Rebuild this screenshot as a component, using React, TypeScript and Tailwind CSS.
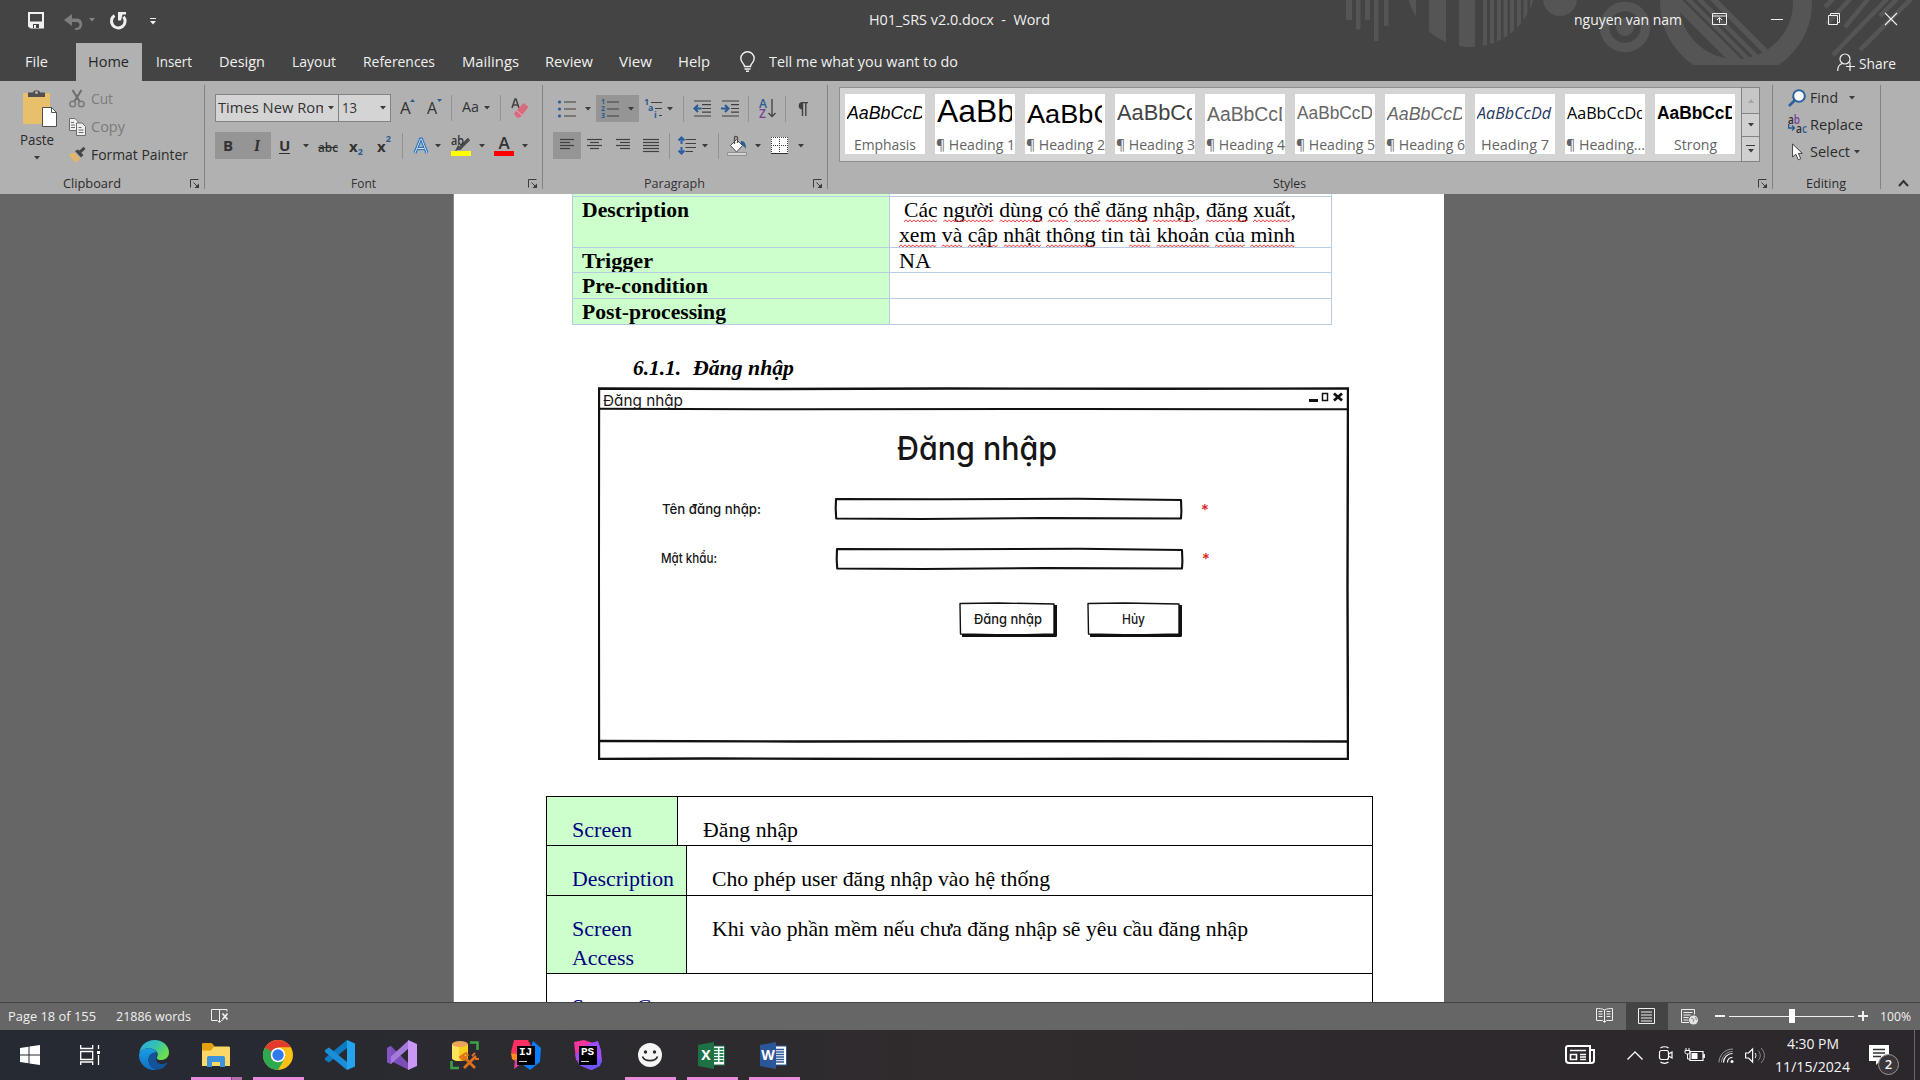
import React, { useLayoutEffect, useRef, useState } from "react";

type Kids = { children?: React.ReactNode };

/* One line of text set to an exact advance width. */
function Fit({ w, className = "", children }: { w: number; className?: string } & Kids) {
  const ref = useRef<HTMLSpanElement>(null);
  const [k, setK] = useState(1);
  useLayoutEffect(() => {
    if (ref.current) setK(w / (ref.current.getBoundingClientRect().width || w));
  }, [w]);
  return (
    <span className={"inline-block shrink-0 whitespace-pre " + className} style={{ width: w }}>
      <span ref={ref} className="inline-block origin-left" style={{ transform: `scaleX(${k})` }}>
        {children}
      </span>
    </span>
  );
}

function Svg({ w, h, className = "", children }: { w: number; h: number; className?: string } & Kids) {
  return (
    <svg width={w} height={h} viewBox={`0 0 ${w} ${h}`} className={"shrink-0 overflow-visible " + className} fill="none">
      {children}
    </svg>
  );
}

const Caret = ({ className = "" }: { className?: string }) => (
  <Svg w={6} h={4} className={"text-[#3b3b3b] " + className}>
    <path d="M0 0h6L3 3.6z" fill="currentColor" />
  </Svg>
);

const Sep = ({ className = "" }: { className?: string }) => (
  <div className={"h-[26px] w-px shrink-0 bg-[#929292] " + className} />
);

const Divider = () => <div className="mt-1 h-[104px] w-px shrink-0 bg-[#838383]" />;

const Launcher = ({ className = "" }: { className?: string }) => (
  <Svg w={9} h={9} className={className}>
    <path d="M.5 8.500V.5H8.500M3.500 3.500l4 4" stroke="#3b3b3b" />
    <path d="M9 4.500V9H4.500z" fill="#3b3b3b" />
  </Svg>
);

/* ---------- title bar ---------- */

function TitleArt() {
  return (
    <svg width="580" height="81" viewBox="1340 0 580 81" className="absolute right-0 top-0" fill="#555555">
      <path d="M1346 0h6v20h-6zM1356 0h4.500v29.500h-4.500zM1365 0h5v20h-5zM1374 0h4.500v41h-4.500zM1384 0h4.500v26h-4.500z" />
      <clipPath id="disc"><circle cx="1471" cy="-18" r="65" /></clipPath>
      <path clipPath="url(#disc)" d="M1400 0h16v47h-16zM1429 0h17v47h-17zM1459 0h16v47h-16zM1483 0h4v47h-4zM1490 0h4v47h-4zM1497 0h4v47h-4zM1503.500 0h4v47h-4zM1510 0h4v47h-4zM1517 0h4v47h-4zM1523.500 0h4v47h-4zM1530 0h4v47h-4z" />
      <circle cx="1560" cy="-1" r="17" />
      <circle cx="1625" cy="27" r="20.500" fill="none" stroke="#555555" strokeWidth="9.500" />
      <circle cx="1625" cy="27" r="9" />
      <clipPath id="cut"><rect x="1640" y="0" width="200" height="65" /></clipPath>
      <g clipPath="url(#cut)">
        <circle cx="1736" cy="2" r="66.500" fill="none" stroke="#555555" strokeWidth="19" />
      </g>
      <clipPath id="inner"><circle cx="1736" cy="2" r="58" /></clipPath>
      <g clipPath="url(#inner)" stroke="#555555">
        <path d="M1674 3l60 60M1687-2l62 62M1698-2l62 62" strokeWidth="4.500" />
        <path d="M1676-2l64 64" strokeWidth="6" />
        <path d="M1712-2l58 58" strokeWidth="6" />
      </g>
      <g stroke="#555555" strokeWidth="4.500">
        <path d="M1833-1l-8 8M1850-1l-23 25M1868-1l-23 28M1887-1l-54 56M1897-1l-17 17M1911-1l-51 51" />
      </g>
    </svg>
  );
}

function TitleBar() {
  return (
    <div className="relative flex h-[43px] items-center text-[15px] leading-[20px] text-[#f0f0f0]">
      <Svg w={16} h={17} className="-mt-[2px] ml-7">
        <path d="M1 1h14v14.500H3L1 14z" stroke="#f0f0f0" strokeWidth="2" />
        <path d="M2 9.500h12V15H2z" fill="#f0f0f0" />
        <path d="M5 12h6v4H5z" fill="#444" />
        <path d="M6 13h2v3H6z" fill="#f0f0f0" />
      </Svg>
      <Svg w={19} h={16} className="ml-5">
        <path d="M8 0L0 6l8 6V8h4.500c4 0 4 5 0 6H11v2h2c7 0 7-11.500 0-11.500H8z" fill="#7d7d7d" />
      </Svg>
      <Caret className="-mt-[3px] ml-[6px] !text-[#858585]" />
      <Svg w={18} h={18} className="-mt-px ml-[14px]">
        <path d="M5.500 3.500A6.800 6.800 0 1 0 14.500 4.800" stroke="#f0f0f0" strokeWidth="3" />
        <path d="M9 0h8v2.500h-3.500L12 8.500H9z" fill="#f0f0f0" />
      </Svg>
      <Svg w={6} h={7} className="ml-[23px]">
        <path d="M0 .5h6" stroke="#f0f0f0" />
        <path d="M0 3h6L3 6.500z" fill="#f0f0f0" />
      </Svg>
      <Fit w={181} className="-mt-[6px] ml-[713px]">H01_SRS v2.0.docx  -  Word</Fit>
      <Fit w={108} className="-mt-[6px] ml-[524px]">nguyen van nam</Fit>
      <Svg w={15} h={12} className="-mt-[5px] ml-[30px]">
        <path d="M.5.5h14v11H.5zM.5 3h14M7.500 10V5M5 7l2.500-2.500L10 7" stroke="#f0f0f0" />
      </Svg>
      <div className="-mt-[5px] ml-[44px] h-px w-3 bg-[#f0f0f0]" />
      <Svg w={12} h={12} className="-mt-[5px] ml-[45px]">
        <path d="M.5 2.500h9v9h-9zM2.500 2V.5h9v9H10" stroke="#f0f0f0" />
      </Svg>
      <Svg w={12} h={12} className="-mt-[5px] ml-[45px]">
        <path d="M0 0l12 12M12 0L0 12" stroke="#f0f0f0" strokeWidth="1.100" />
      </Svg>
    </div>
  );
}

function TabBar() {
  return (
    <div className="relative flex h-[38px] items-center text-[15px] leading-[20px] text-[#f0f0f0]">
      <Fit w={23} className="-mt-[2px] ml-[25px]">File</Fit>
      <div className="ml-[28px] flex h-full w-[66px] items-center justify-center bg-[#b1b1b1] text-[#262626]">
        <Fit w={41} className="-ml-px -mt-[2px]">Home</Fit>
      </div>
      <Fit w={36} className="-mt-[2px] ml-[14px]">Insert</Fit>
      <Fit w={46} className="-mt-[2px] ml-[27px]">Design</Fit>
      <Fit w={44} className="-mt-[2px] ml-[27px]">Layout</Fit>
      <Fit w={72} className="-mt-[2px] ml-[27px]">References</Fit>
      <Fit w={57} className="-mt-[2px] ml-[27px]">Mailings</Fit>
      <Fit w={48} className="-mt-[2px] ml-[26px]">Review</Fit>
      <Fit w={33} className="-mt-[2px] ml-[26px]">View</Fit>
      <Fit w={32} className="-mt-[2px] ml-[26px]">Help</Fit>
      <Svg w={15} h={20} className="ml-[30px]">
        <path d="M4.500 14.500c0-3-3.700-4-3.700-8a6.600 6.600 0 0 1 13.400 0c0 4-3.700 5-3.700 8zM4.500 17h6M6 19.300h3" stroke="#f0f0f0" strokeWidth="1.400" />
      </Svg>
      <Fit w={189} className="-mt-[2px] ml-[14px]">Tell me what you want to do</Fit>
      <Svg w={18} h={19} className="ml-[879px]">
        <circle cx="8" cy="6" r="5" stroke="#f0f0f0" strokeWidth="1.200" />
        <path d="M.7 18c0-4 2-7 5-7.500M13 9v9M9 13.500h9" stroke="#f0f0f0" strokeWidth="1.200" />
      </Svg>
      <Fit w={37} className="ml-[4px] mt-[1px]">Share</Fit>
    </div>
  );
}

/* ---------- ribbon ---------- */

function ClipboardGroup() {
  return (
    <div className="flex w-[204px] flex-col text-[14.500px] leading-[18px] text-[#2b2b2b]">
      <div className="flex h-[93px]">
        <div className="flex w-[69px] flex-col items-center pt-2">
          <Svg w={34} h={38} className="ml-[11px]">
            <path d="M0 4h27v31H0z" fill="#e8c06c" />
            <path d="M5 8V3.500h5C10 .5 17 .5 17 3.500h5V8z" fill="#505050" />
            <circle cx="13.500" cy="3.500" r="1.500" fill="#b1b1b1" />
            <path d="M19.500 18.500h9l5 5v14h-14z" fill="#fff" stroke="#505050" />
            <path d="M28.500 18.500v5h5" stroke="#505050" />
          </Svg>
          <Fit w={34} className="ml-[5px] mt-[4px]">Paste</Fit>
          <Caret className="ml-[5px] mt-[7px]" />
        </div>
        <div className="flex flex-col pt-[8px]">
          <div className="flex h-5 items-center text-[#7b7b7b]">
            <Svg w={16} h={18}>
              <path d="M3.500 0l7.500 12M12.500 0L5 12" stroke="#6d6d6d" strokeWidth="2" />
              <circle cx="3.700" cy="14" r="2.800" stroke="#7b7b7b" strokeWidth="1.500" />
              <circle cx="12.300" cy="14" r="2.800" stroke="#7b7b7b" strokeWidth="1.500" />
            </Svg>
            <Fit w={22} className="ml-[6px]">Cut</Fit>
          </div>
          <div className="mt-2 flex h-5 items-center text-[#7b7b7b]">
            <Svg w={17} h={18}>
              <path d="M.5.5H6l3 3v9H.5z" fill="#efefef" stroke="#6d6d6d" />
              <path d="M7.500 5h5.500l3.500 3.500v9h-9z" fill="#efefef" stroke="#6d6d6d" />
              <path d="M2 4.500h3M2 7h4M2 9.500h4M9.500 9.500h3M9.500 12h5M9.500 14.500h5" stroke="#6d6d6d" />
            </Svg>
            <Fit w={34} className="ml-[5px]">Copy</Fit>
          </div>
          <div className="mt-2 flex h-5 items-center">
            <Svg w={17} h={16}>
              <path d="M0 7.500l5-2 6 6L7 16C5 13 2 11 0 7.500z" fill="#e3b56a" />
              <path d="M6 4l3-1.500 5.500 5.500-2.500 2.500z" fill="#454545" />
              <path d="M10.500 5.500L15.500.800" stroke="#454545" strokeWidth="3" />
            </Svg>
            <Fit w={97} className="ml-[5px]">Format Painter</Fit>
          </div>
        </div>
      </div>
      <div className="flex items-center text-[13.500px]">
        <Fit w={58} className="ml-[63px]">Clipboard</Fit>
        <Launcher className="ml-[69px]" />
      </div>
    </div>
  );
}

const GrowA = ({ down = false }: { down?: boolean }) => (
  <div className={"flex w-[14px] " + (down ? "ml-[13px]" : "ml-[9px]")}>
    <span className={"inline-block w-[10px] font-medium leading-[20px] " + (down ? "text-[16px]" : "text-[17px]")}>A</span>
    <Svg w={5} h={3} className="mt-px">
      <path d={down ? "M0 0h5L2.500 3z" : "M0 3h5L2.500 0z"} fill="#2a5c93" />
    </Svg>
  </div>
);

function FontGroup() {
  return (
    <div className="flex w-[337px] flex-col pl-[10px] text-[14.500px] text-[#333]">
      <div className="mt-[13px] flex h-7 items-center">
        <div className="flex h-7 w-[124px] items-center border border-[#838383] bg-[#d4d4d4]">
          <div className="ml-[2px] flex w-[105px] overflow-hidden"><Fit w={128}>Times New Roman</Fit></div>
          <Caret className="ml-[5px]" />
        </div>
        <div className="-ml-px flex h-7 w-[53px] items-center border border-[#838383] bg-[#d4d4d4]">
          <Fit w={15} className="ml-[3px]">13</Fit>
          <Caret className="ml-[23px]" />
        </div>
        <GrowA />
        <GrowA down />
        <Sep className="ml-[10px]" />
        <Fit w={17} className="-mt-[2px] ml-[10px]">Aa</Fit>
        <Caret className="ml-[5px]" />
        <Sep className="ml-[10px]" />
        <div className="ml-[10px] flex w-[18px]">
          <Svg w={18} h={20}>
            <path d="M1 10L4 1h1l3 9M2 7h5" stroke="#444" strokeWidth="1.600" />
            <path d="M3 15.500L12.500 5l5 4L9 19.500H5.500z" fill="#d9697c" />
            <path d="M5.500 12.500l5.500 4.500" stroke="#eeb0ba" />
          </Svg>
        </div>
      </div>
      <div className="mt-[10px] flex h-[27px] items-center">
        <div className="flex h-full w-7 items-center justify-center bg-[#959595] pr-[2px] text-[15px] font-bold">B</div>
        <div className="flex h-full w-7 items-center justify-center bg-[#959595] font-serif text-[16px] font-bold italic">I</div>
        <span className="ml-2 w-[11px] border-b-[1.500px] border-[#333] text-[15px] font-bold leading-[15px]">U</span>
        <Caret className="ml-[13px]" />
        <Fit w={20} className="ml-[9px] mt-1 text-[12px] font-semibold"><span className="line-through">abc</span></Fit>
        <div className="ml-[11px] flex w-[14px] items-end text-[15px] font-bold leading-[18px]">
          x<span className="-mb-[3px] text-[9px] leading-[12px] text-[#2a5c93]">2</span>
        </div>
        <div className="ml-[14px] flex w-[15px] items-start text-[15px] font-bold leading-[18px]">
          x<span className="-mt-[4px] text-[9px] leading-[12px] text-[#2a5c93]">2</span>
        </div>
        <Sep className="ml-[10px]" />
        <Svg w={16} h={18} className="ml-[10px]">
          <path d="M2 16L7.500 2h1L14 16M4.500 11.500h7" stroke="#78a5d4" strokeWidth="4" strokeLinejoin="round" />
          <path d="M2 16L7.500 2h1L14 16M4.500 11.500h7" stroke="#2567a8" strokeWidth="2.600" />
          <path d="M2 16L7.500 2h1L14 16M4.500 11.500h7" stroke="#d5e2ef" strokeWidth="1" />
        </Svg>
        <Caret className="ml-[6px]" />
        <div className="ml-[10px] flex w-5 flex-col">
          <div className="flex h-[15px]">
            <Fit w={13} className="text-[13px] font-semibold leading-[9px]">ab</Fit>
            <Svg w={10} h={12} className="-ml-[7px] mt-[2px]">
              <path d="M2 11L12 1" stroke="#4b4b4b" strokeWidth="3.200" />
              <path d="M-2 13l3-6 4 4z" fill="#4b4b4b" />
            </Svg>
          </div>
          <div className="h-[5px] bg-[#ffff00]" />
        </div>
        <Caret className="ml-2" />
        <div className="ml-[9px] flex w-5 flex-col items-center">
          <span className="h-[15px] text-[17px] font-semibold leading-[14px]">A</span>
          <div className="h-[5px] w-full bg-[#ff0000]" />
        </div>
        <Caret className="ml-2" />
      </div>
      <div className="mt-[15px] flex items-center text-[13.500px] leading-[18px]">
        <Fit w={25} className="ml-[136px]">Font</Fit>
        <Launcher className="ml-[152px]" />
      </div>
    </div>
  );
}

const INK = "#404040";
const BLUE = "#2a5c93";

const AlignLines = ({ rows, w, className = "" }: { rows: [number, number][]; w: number; className?: string }) => (
  <Svg w={w} h={13} className={className}>
    {rows.map(([a, b], i) => (
      <path key={i} d={`M${a} ${i * 3 + 0.5}H${b}`} stroke={INK} strokeWidth="1.200" />
    ))}
  </Svg>
);

function ParagraphGroup() {
  return (
    <div className="flex w-[284px] flex-col pl-[10px] text-[#333]">
      <div className="mt-[14px] flex h-[27px] items-center">
        <Svg w={18} h={18} className="ml-[5px]">
          <path d="M6 2h12M6 9h12M6 16h12" stroke={INK} strokeWidth="1.200" />
          <g fill={BLUE}><circle cx="1.500" cy="2" r="1.600" /><circle cx="1.500" cy="9" r="1.600" /><circle cx="1.500" cy="16" r="1.600" /></g>
        </Svg>
        <Caret className="ml-[9px]" />
        <div className="ml-[5px] flex h-full w-[43px] items-center bg-[#959595]">
          <div className="ml-[5px] flex w-1 flex-col text-[7px] font-bold leading-[7px] text-[#2a5c93]"><span>1</span><span>2</span><span>3</span></div>
          <Svg w={12} h={18} className="ml-[2px]"><path d="M0 2h12M0 9h12M0 16h12" stroke={INK} strokeWidth="1.200" /></Svg>
          <Caret className="ml-[9px]" />
        </div>
        <div className="ml-[5px] flex w-[18px] flex-col text-[9px] font-bold leading-[6px] text-[#2a5c93]">
          <div className="flex items-center gap-[2px]"><span>1</span><i className="h-px w-3 bg-[#404040]" /></div>
          <div className="ml-1 flex items-center gap-[2px]"><span>a</span><i className="h-px w-2 bg-[#404040]" /></div>
          <div className="ml-[10px] flex items-center gap-[2px] pt-px"><span>i</span><i className="h-px w-1 bg-[#404040]" /></div>
        </div>
        <Caret className="ml-[5px]" />
        <Sep className="ml-[10px]" />
        <Svg w={18} h={17} className="ml-[9px]">
          <path d="M1 1h17M9 4.700h9M9 8.500h9M9 12.200h9M1 16h17" stroke={INK} strokeWidth="1.200" />
          <path d="M8.500 8.500H1.500M5 5L1.500 8.500 5 12" stroke={BLUE} strokeWidth="2" />
        </Svg>
        <Svg w={18} h={17} className="ml-[10px]">
          <path d="M1 1h17M10 4.700h8M10 8.500h8M10 12.200h8M1 16h17" stroke={INK} strokeWidth="1.200" />
          <path d="M0 8.500h7M4 5l3.500 3.500L4 12" stroke={BLUE} strokeWidth="2" />
        </Svg>
        <Sep className="ml-[9px]" />
        <div className="ml-[10px] flex w-[17px]">
          <div className="flex w-[9px] flex-col text-[12px] font-semibold leading-[10px]">
            <span className="text-[#2a5c93]">A</span><span className="text-[#7b3f98]">Z</span>
          </div>
          <Svg w={8} h={19}><path d="M4 0v18M.5 14L4 17.500 7.500 14" stroke={INK} strokeWidth="1.300" /></Svg>
        </div>
        <Sep className="ml-[9px]" />
        <Svg w={11} h={14} className="ml-[11px]">
          <path d="M5 .6h6M5.500.6V14M8.800.6V14" stroke={INK} strokeWidth="1.400" />
          <path d="M5.500 0a3.800 3.800 0 0 0 0 7.600z" fill={INK} />
        </Svg>
      </div>
      <div className="mt-[10px] flex h-[27px] items-center">
        <div className="flex h-full w-7 items-center justify-center bg-[#959595]">
          <AlignLines w={14} rows={[[0, 14], [0, 10], [0, 14], [0, 10]]} />
        </div>
        <AlignLines w={15} className="ml-[6px]" rows={[[0, 15], [3, 12], [0, 15], [3, 12]]} />
        <AlignLines w={14} className="ml-[14px]" rows={[[0, 14], [4, 14], [0, 14], [4, 14]]} />
        <AlignLines w={16} className="ml-[13px]" rows={[[0, 16], [0, 16], [0, 16], [0, 16], [0, 16]]} />
        <Sep className="ml-[10px]" />
        <Svg w={18} h={19} className="ml-[8px]">
          <path d="M7.500 3.500H18M7.500 7.500H18M7.500 11.500H18M7.500 15.500H15" stroke={INK} strokeWidth="1.200" />
          <path d="M3.500 2v6M3.500 11v6M.5 4.500l3-3 3 3M.5 14.500l3 3 3-3" stroke="#2a5fa5" strokeWidth="2" />
        </Svg>
        <Caret className="ml-[6px]" />
        <Sep className="ml-[10px]" />
        <Svg w={20} h={20} className="ml-2">
          <path d="M14 5c4 0 5 3 5 8-2-3-4-4-6-4z" fill={BLUE} />
          <path d="M3.500 9.500l6-6 6 6-6 6.500z" fill="#fff" stroke="#505050" />
          <path d="M7.500 8V1.500c0-1.500 3-1.500 3 0V7" stroke="#505050" strokeWidth="1.300" />
          <path d="M.5 16.500h19v3H.5z" fill="#d4d4d4" stroke="#909090" />
        </Svg>
        <Caret className="ml-2" />
        <Svg w={17} h={17} className="ml-[10px]">
          <path d="M0 0h17v17H0z" fill="#fff" />
          <path d="M.5 0v16M16.500 0v16M0 .5h17M8.500 0v16M0 8.500h17" stroke="#404040" strokeDasharray="1 1" />
          <path d="M0 16.500h17" stroke="#303030" />
        </Svg>
        <Caret className="ml-[10px]" />
      </div>
      <div className="mt-[15px] flex items-center text-[13.500px] leading-[18px]">
        <Fit w={61} className="ml-[91px]">Paragraph</Fit>
        <Launcher className="ml-[108px]" />
      </div>
    </div>
  );
}

const STYLES = [
  { label: "Emphasis", w: 62, sample: "AaBbCcD", fit: 78, cls: "font-['Liberation_Sans'] text-[17.5px] italic pt-[11px] text-black" },
  { label: "¶ Heading 1", w: 79, sample: "AaBb", fit: 78, cls: "font-['Liberation_Sans'] text-[32px] pt-[1px] text-black" },
  { label: "¶ Heading 2", w: 79, sample: "AaBbC", fit: 86, cls: "font-['Liberation_Sans'] text-[26.5px] pt-[7px] text-black" },
  { label: "¶ Heading 3", w: 79, sample: "AaBbCc", fit: 80, cls: "font-['Liberation_Sans'] text-[22px] pt-[8px] text-[#434343]" },
  { label: "¶ Heading 4", w: 79, sample: "AaBbCcD", fit: 85, cls: "font-['Liberation_Sans'] text-[20px] pt-[9.5px] text-[#666]" },
  { label: "¶ Heading 5", w: 79, sample: "AaBbCcD", fit: 76, cls: "font-['Liberation_Sans'] text-[17.5px] pt-[11px] text-[#666]" },
  { label: "¶ Heading 6", w: 79, sample: "AaBbCcD", fit: 78, cls: "font-['Liberation_Sans'] text-[18px] italic pt-[11px] text-[#666]" },
  { label: "Heading 7", w: 68, sample: "AaBbCcDd", fit: 74, cls: "text-[15.5px] italic pt-[12px] text-[#1f3763]" },
  { label: "¶ Heading...", w: 79, sample: "AaBbCcDd", fit: 79, cls: "text-[16.5px] pt-[11px] text-black" },
  { label: "Strong", w: 43, sample: "AaBbCcD", fit: 80, cls: "font-['Liberation_Sans'] text-[17.5px] font-bold pt-[11px] text-black" },
];

function StylesGroup() {
  return (
    <div className="flex w-[944px] flex-col pl-[11px] text-[#2b2b2b]">
      <div className="mt-[6px] flex h-[75px] w-[921px] border border-[#8f8f8f] bg-[#d4d4d4]">
        <div className="flex gap-[10px] pl-[5px] pt-[6px]">
          {STYLES.map((s) => (
            <div key={s.label} className="flex h-[60px] w-20 flex-col bg-white">
              <div className={"ml-[2px] flex h-[42px] w-[75px] overflow-hidden whitespace-nowrap leading-none " + s.cls}>
                <Fit w={s.fit}>{s.sample}</Fit>
              </div>
              <div className="flex justify-center text-[14.500px] leading-[18px] text-[#646464]">
                <Fit w={s.w}>{s.label}</Fit>
              </div>
            </div>
          ))}
        </div>
        <div className="-my-px -mr-px ml-auto flex w-[19px] flex-col border border-[#838383] bg-[#d0d0d0]">
          <div className="flex h-[25px] items-center justify-center bg-[#c6c6c6]">
            <Svg w={6} h={4}><path d="M0 4h6L3 0z" fill="#a5a5a5" /></Svg>
          </div>
          <div className="flex h-6 items-center justify-center border-y border-[#838383]"><Caret /></div>
          <div className="flex flex-1 flex-col items-center justify-center gap-[3px]">
            <div className="h-px w-[9px] bg-[#3b3b3b]" /><Caret />
          </div>
        </div>
      </div>
      <div className="mt-[12px] flex items-center text-[13.500px] leading-[18px]">
        <Fit w={33} className="ml-[434px]">Styles</Fit>
        <Launcher className="ml-[452px]" />
      </div>
    </div>
  );
}

function EditingGroup() {
  return (
    <div className="flex w-[107px] flex-col pl-[15px] text-[14.500px] leading-[18px] text-[#2b2b2b]">
      <div className="mt-[7px] flex h-5 items-center">
        <Svg w={18} h={18}>
          <path d="M1 17l6-6" stroke="#2a5f9e" strokeWidth="2.600" />
          <circle cx="11" cy="7" r="5.800" fill="#fff" stroke="#2a5f9e" strokeWidth="2" />
        </Svg>
        <Fit w={28} className="-mt-px ml-1">Find</Fit>
        <Caret className="ml-[11px]" />
      </div>
      <div className="mt-[7px] flex h-5 items-center">
        <div className="-mt-[2px] flex w-[20px] flex-col text-[12px] font-semibold leading-[9px]">
          <Fit w={12}>a<span className="text-[#7b3f98]">b</span></Fit>
          <div className="flex">
            <Svg w={8} h={9}><path d="M.7 0v4H6M4 1.500L6.500 4 4 6.500" stroke={BLUE} strokeWidth="1.400" /></Svg>
            <Fit w={11}>a<span className="text-[#2a5c93]">c</span></Fit>
          </div>
        </div>
        <Fit w={53} className="ml-[2px]">Replace</Fit>
      </div>
      <div className="mt-[7px] flex h-5 items-center">
        <Svg w={12} h={18} className="ml-1">
          <path d="M.6 1v13l3.200-2.800 2.500 5.600 2.500-1.100-2.500-5.300h4z" fill="#fff" stroke="#404040" />
        </Svg>
        <Fit w={40} className="ml-[6px]">Select</Fit>
        <Caret className="ml-[4px]" />
      </div>
      <div className="mt-[12px] text-[13.500px]">
        <Fit w={40} className="ml-[18px]">Editing</Fit>
      </div>
    </div>
  );
}

function Ribbon() {
  return (
    <div className="flex h-[113px] bg-[#b1b1b1]">
      <ClipboardGroup /><Divider />
      <FontGroup /><Divider />
      <ParagraphGroup /><Divider />
      <StylesGroup /><Divider />
      <EditingGroup /><Divider />
      <Svg w={11} h={8} className="ml-[17px] mt-[98px]">
        <path d="M1 7l4.500-5L10 7" stroke="#333" strokeWidth="2" />
      </Svg>
    </div>
  );
}

/* ---------- document ---------- */

/* A word flagged by the spell checker: tight red zigzag under it. */
const Err = ({ children }: Kids) => (
  <span className="relative">
    {children}
    <svg className="absolute -bottom-px left-0 h-[4px] w-full" fill="none">
      <defs>
        <pattern id="zigzag" width="4" height="4" patternUnits="userSpaceOnUse">
          <path d="M-1 4L2 .8 5 4" stroke="#f02020" strokeWidth=".9" fill="none" />
        </pattern>
      </defs>
      <rect width="100%" height="4" fill="url(#zigzag)" />
    </svg>
  </span>
);

/* "+" marks plain text; a leading "," is glued to the word before it. */
function Words({ items }: { items: string[] }) {
  return (
    <>
      {items.map((t, i) => (
        <React.Fragment key={i}>
          {i > 0 && t !== "+," && " "}
          {t.startsWith("+") ? t.slice(1) : <Err>{t}</Err>}
        </React.Fragment>
      ))}
    </>
  );
}

function SummaryTable() {
  const left = "w-[318px] overflow-hidden border-x border-[#b8cce4] bg-[#ccffcc] pl-[9px] font-bold";
  const right = "flex-1 border-r border-[#b8cce4] pl-[9px]";
  return (
    <div className="ml-[118px] w-[760px] text-[22px] leading-[25px] text-black">
      <div className="flex h-[2px]"><div className={left} /><div className={right} /></div>
      <div className="flex h-[51px] border-t border-[#b8cce4]">
        <div className={left}><Fit w={107}>Description</Fit></div>
        <div className={right}>
          <Fit w={392} className="ml-[5px]"><Words items={["Các", "người", "dùng", "có", "thể", "đăng", "nhập", "+,", "đăng", "xuất", "+,"]} /></Fit>
          <Fit w={396}><Words items={["xem", "và", "cập", "nhật", "thông", "+tin", "tài", "khoản", "của", "mình"]} /></Fit>
        </div>
      </div>
      <div className="flex h-[25px] border-t border-[#b8cce4]">
        <div className={left}><Fit w={71}>Trigger</Fit></div>
        <div className={right}><Fit w={32}>NA</Fit></div>
      </div>
      <div className="flex h-[26px] border-t border-[#b8cce4]">
        <div className={left}><Fit w={126}>Pre-condition</Fit></div><div className={right} />
      </div>
      <div className="flex h-[27px] border-y border-[#b8cce4]">
        <div className={left}><Fit w={144}>Post-processing</Fit></div><div className={right} />
      </div>
    </div>
  );
}

const HAND = "font-['Inter'] [font-feature-settings:'cv11'] ";

/* Rectangle stroked with a slightly uneven pen line. */
function SketchBox({ w, h, className = "", shadow = false, children }: { w: number; h: number; className?: string; shadow?: boolean } & Kids) {
  return (
    <div className={"relative flex shrink-0 items-center justify-center " + className} style={{ width: w, height: h }}>
      <svg width={w} height={h} className="absolute inset-0 overflow-visible" fill="none" stroke="#111" strokeLinejoin="round">
        {shadow ? (
          <>
            <path d={`M3 ${h - 1.5}H${w - 1.5}V3`} strokeWidth="3" />
            <path d={`M1 1.500L${w * 0.4} 1L${w - 3} 2V${h - 3}L${w * 0.5} ${h - 2}L1.500 ${h - 3}Z`} strokeWidth="1.400" />
          </>
        ) : (
          <path d={`M1 1L${w * 0.3} 1.300L${w * 0.7} .8L${w - 1} 2L${w - 0.6} ${h * 0.6}L${w - 1} ${h - 1.5}L${w * 0.6} ${h - 1.9}L${w * 0.25} ${h - 1}L1.200 ${h - 1.5}L.7 ${h * 0.5}Z`} strokeWidth="2.100" />
        )}
      </svg>
      {children}
    </div>
  );
}

function Wireframe() {
  return (
    <div className={"relative ml-[144px] mt-[7px] flex h-[373px] w-[751px] flex-col text-[#161616] " + HAND}>
      <svg width="751" height="373" className="absolute inset-0" fill="none" stroke="#111">
        <path d="M1 1.500L180 2 350 1.500 560 1.800 750 1.500 749.500 200 750 372 520 371.700 300 372 110 371.500 1 372 .8 180Z" strokeWidth="2.400" />
        <path d="M1 21.800L200 22.300 480 22 750 22.300" strokeWidth="2" />
        <path d="M1 354L200 354.500 470 354.200 750 354.500" strokeWidth="2.400" />
      </svg>
      <div className="flex h-[23px] items-start pl-[5px] pt-[4px] text-[15px] leading-[20px]">
        <Fit w={80}>Đăng nhập</Fit>
        <Svg w={36} h={10} className="ml-auto mr-[5px] mt-px">
          <path d="M1 8.500h9" stroke="#111" strokeWidth="3" />
          <path d="M14.500 1.500h5v7h-5z" stroke="#111" strokeWidth="1.500" />
          <path d="M26 1.500l8 7M34 1.500l-8 7" stroke="#111" strokeWidth="2.800" />
        </Svg>
      </div>
      <div className="ml-[299px] mt-[19px] text-[32px] font-medium leading-[40px]"><Fit w={160}>Đăng nhập</Fit></div>
      <div className="ml-[64px] mt-[29px] flex h-[22px] items-center text-[13.500px] font-medium">
        <Fit w={99}>Tên đăng nhập:</Fit>
        <SketchBox w={347} h={22} className="ml-[74px]" />
        <span className="ml-[19px] mt-[2px] text-[15px] leading-[14px] text-[#d22]">*</span>
      </div>
      <div className="ml-[63px] mt-[28px] flex h-[22px] items-center text-[13.500px] font-medium">
        <Fit w={56} className="-mt-[2px]">Mật khẩu:</Fit>
        <SketchBox w={347} h={22} className="ml-[119px]" />
        <span className="ml-[19px] text-[15px] leading-[14px] text-[#d22]">*</span>
      </div>
      <div className="ml-[361px] mt-[32px] flex gap-[30px] text-[13.500px] font-medium">
        <SketchBox w={98} h={35} shadow><Fit w={68}>Đăng nhập</Fit></SketchBox>
        <SketchBox w={95} h={35} shadow><Fit w={23} className="-ml-[3px]">Hủy</Fit></SketchBox>
      </div>
    </div>
  );
}

function ScreenTable() {
  const label = "border-r border-black bg-[#ccffcc] pl-[25px] text-[#000080]";
  return (
    <div className="ml-[92px] mt-[36px] w-[827px] border-x border-black text-[22px] leading-[29px] text-black">
      <div className="flex h-[49px] border-t border-black">
        <div className={"w-[131px] pt-[18px] " + label}><Fit w={60}>Screen</Fit></div>
        <div className="pl-[25px] pt-[18px]"><Fit w={95}>Đăng nhập</Fit></div>
      </div>
      <div className="flex h-[50px] border-t border-black">
        <div className={"w-[140px] pt-[18px] " + label}><Fit w={102}>Description</Fit></div>
        <div className="pl-[25px] pt-[18px]"><Fit w={338}>Cho phép user đăng nhập vào hệ thống</Fit></div>
      </div>
      <div className="flex h-[78px] border-t border-black">
        <div className={"flex w-[140px] flex-col pt-[18px] " + label}><Fit w={60}>Screen</Fit><Fit w={62}>Access</Fit></div>
        <div className="pl-[25px] pt-[18px]"><Fit w={536}>Khi vào phần mềm nếu chưa đăng nhập sẽ yêu cầu đăng nhập</Fit></div>
      </div>
      <div className="h-[78px] border-t border-black pl-[25px] pt-[18px] text-[#000080]"><Fit w={134}>Screen Content</Fit></div>
    </div>
  );
}

function Document() {
  return (
    <div className="h-[808px] overflow-hidden bg-[#666666]">
      <div className="ml-[453px] h-[900px] w-[991px] border-l border-[#8a8a8a] bg-white font-['Liberation_Serif']">
        <SummaryTable />
        <div className="ml-[179px] mt-[31px] flex h-6 text-[22px] font-bold italic leading-6 text-black">
          <Fit w={48}>6.1.1.</Fit>
          <Fit w={101} className="ml-[12px]">Đăng nhập</Fit>
        </div>
        <Wireframe />
        <ScreenTable />
      </div>
    </div>
  );
}

/* ---------- status bar ---------- */

function StatusBar() {
  return (
    <div className="flex h-7 items-center border-t border-[#444] bg-[#666666] text-[13px] leading-[18px] text-[#f0f0f0]">
      <Fit w={88} className="-mt-[2px] ml-2">Page 18 of 155</Fit>
      <Fit w={75} className="-mt-[2px] ml-5">21886 words</Fit>
      <Svg w={17} h={15} className="-mt-[2px] ml-5">
        <path d="M8.500 1.500H.5v11h6l2 2 2-2h1M8.500 1v13M9 1.500h7v2" stroke="#f0f0f0" />
        <path d="M11.500 5.500l5 6M16.500 5.500l-5 6" stroke="#f0f0f0" strokeWidth="1.700" />
      </Svg>
      <Svg w={17} h={15} className="-mt-[2px] ml-[1368px]">
        <path d="M8.500 2C6 .5 3 .5.500.5v12h6l2 2 2-2h6V.5c-2.500 0-5.500 0-8 1.500zM8.500 2v12M2.500 3.500h4M2.500 6h4M2.500 8.500h4M10.500 3.500h4M10.500 6h4M10.500 8.500h4" stroke="#f0f0f0" />
      </Svg>
      <div className="ml-[13px] flex h-full w-[42px] items-center bg-[#444] pl-3">
        <Svg w={17} h={16} className="-mt-px">
          <path d="M.5.5h16v15H.5zM3 4h11M3 7h11M3 10h11M3 13h11" stroke="#f0f0f0" />
        </Svg>
      </div>
      <Svg w={17} h={16} className="ml-[13px]">
        <path d="M8 13.500H.5V.5h13v5M2.500 3.500h9M2.500 6h7M2.500 8.500h5M2.500 11h5" stroke="#f0f0f0" />
        <circle cx="12.500" cy="11" r="4.500" fill="#e4e4e4" />
        <path d="M10 9l3 1.500-1 2.500M14.500 8l1 3" stroke="#888" />
      </Svg>
      <div className="-mt-[2px] ml-[17px] h-[2px] w-[10px] bg-[#f0f0f0]" />
      <div className="-mt-px ml-1 flex w-[125px] items-center">
        <div className="h-px w-[60px] bg-[#f0f0f0]" />
        <div className="h-[14px] w-[6px] bg-white" />
        <div className="h-px flex-1 bg-[#f0f0f0]" />
      </div>
      <Svg w={10} h={10} className="-mt-px ml-1"><path d="M5 0v10M0 5h10" stroke="#f0f0f0" strokeWidth="2" /></Svg>
      <Fit w={31} className="-mt-[2px] ml-[12px]">100%</Fit>
    </div>
  );
}

/* ---------- taskbar ---------- */

const EdgeIcon = () => (
  <Svg w={30} h={30}>
    <defs>
      <linearGradient id="e1" x1="0" y1="0" x2="1" y2=".5"><stop offset="0" stopColor="#2aa8e8" /><stop offset=".55" stopColor="#35c1b1" /><stop offset="1" stopColor="#6be04e" /></linearGradient>
      <linearGradient id="e2" x1="0" y1="0" x2="0" y2="1"><stop offset="0" stopColor="#1b9de2" /><stop offset="1" stopColor="#0f6fc6" /></linearGradient>
    </defs>
    <path d="M.3 13C1.500 5 8 0 15.500 0 24 0 30 6 30 12.500c0 5-4 7.500-8 7.500-3.500 0-5-1.500-4-3 1.500-2 1-5.500-3-7.500C10 7 3 8.500.3 13z" fill="url(#e1)" />
    <path d="M0 15.500C0 11 5 8.300 10 8.300c4.500 0 7 2.500 8 4.500-4-1-8.500 2-8.500 7 0 4.500 3 8.500 8 10A15 15 0 0 1 0 15.500z" fill="url(#e2)" />
    <path d="M17.500 12.500c-5 0-8 3.500-8 8 0 5 4.500 9.500 10 9 4-.6 7-3 8.800-6 .3-.7-.3-1-.9-.6-5.400 2.600-12 .1-10-6 .5-1.500.6-3 .1-4.400z" fill="#14539a" />
  </Svg>
);

const ChromeIcon = () => (
  <Svg w={30} h={30}>
    <circle cx="15" cy="15" r="15" fill="#fbc116" />
    <path d="M15 15L2 7.500A15 15 0 0 1 28 7.500H15z" fill="#e33b2e" />
    <path d="M2 7.500A15 15 0 0 0 15 30l6.500-11.300L15 15z" fill="#2da94f" />
    <path d="M2 7.500L8.500 19 15 15V7.500z" fill="#e33b2e" />
    <path d="M2 7.500L8.500 18.800 12 20l3-5z" fill="#2da94f" />
    <path d="M15 7.500h13L22 18l-7-3z" fill="#fbc116" />
    <circle cx="15" cy="15" r="7.300" fill="#fff" />
    <circle cx="15" cy="15" r="5.700" fill="#3079ee" />
  </Svg>
);

const JetIcon = ({ label, ps = false }: { label: string; ps?: boolean }) => (
  <div className="relative flex h-[30px] w-[30px] items-center justify-center">
    <svg width="30" height="30" className="absolute inset-0" fill="none">
      {ps ? (
        <>
          <path d="M1 2l10-2 9 3-8 22-9-5z" fill="#f5359a" />
          <path d="M15 4l10-3 3 9 1 12-11 8-12-5-4-10z" fill="#9b4dff" />
          <path d="M6 24l13 6 8-4 2-6-10-2z" fill="#6b57ff" />
        </>
      ) : (
        <>
          <path d="M3 0h14l5 10L8 18 0 12z" fill="#ff2e63" />
          <path d="M0 13l6 1v8l-5-3z" fill="#ff8a1f" />
          <path d="M4 20l8-3-1 6-8 6z" fill="#e83e9a" />
          <path d="M22 1l8 7-1 14-10 8-8-6 8-14z" fill="#0a7cff" />
        </>
      )}
    </svg>
    <div className="relative flex h-[19px] w-[18px] flex-col bg-black pl-[2px] pt-[2px]">
      <span className="font-['Liberation_Mono'] text-[11px] font-bold leading-[9px] text-white">{label}</span>
      <span className="mt-[4px] h-px w-2 bg-[#ccc]" />
    </div>
  </div>
);

const OfficeIcon = ({ letter, excel = false }: { letter: string; excel?: boolean }) => (
  <div className="relative -ml-px flex h-[27px] w-[27px] items-center">
    <svg width="27" height="27" className="absolute inset-0" fill="none">
      <path d="M14 4h12.500v19H14z" fill="#fff" stroke={excel ? "#1e7145" : "#2b579a"} />
      {excel ? (
        <path d="M16 7h4M16 10h4M16 13h4M16 16h4M16 19h4M21.500 7h4M21.500 10h4M21.500 13h4M21.500 16h4M21.500 19h4" stroke="#2f8a5b" strokeWidth="2" />
      ) : (
        <path d="M15 7.500h9M15 10h9M15 12.500h9M15 15h9M15 17.500h9M15 20h9" stroke="#2b579a" strokeWidth="1.300" />
      )}
      <path d="M0 3l16-3v27L0 24z" fill={excel ? "#1e7145" : "#2b579a"} />
    </svg>
    <span className="relative w-4 text-center text-[14px] font-bold leading-[20px] text-white">{letter}</span>
  </div>
);

const APPS: { icon: React.ReactNode; open?: "one" | "many" }[] = [
  { icon: <EdgeIcon /> },
  {
    icon: (
      <Svg w={28} h={24}>
        <path d="M0 1.500C0 .5.500 0 1.500 0h8l3 3H12v5H0z" fill="#e5a10b" />
        <path d="M0 7.500h9l3-4h14.500c1 0 1.500.5 1.500 1.500V23H0z" fill="#fbd866" />
        <path d="M5 24V15c0-1.500.7-2 2-2h14c1.300 0 2 .5 2 2v9h-5v-5h-8v5z" fill="#3a93dc" />
      </Svg>
    ),
    open: "many",
  },
  { icon: <ChromeIcon />, open: "one" },
  {
    icon: (
      <Svg w={30} h={30}>
        <path d="M22 0l8 3.500v23L22 30z" fill="#24a3ee" />
        <path d="M22 0v8L4 22.500 0 20v-2z" fill="#0e7ac0" />
        <path d="M22 30v-8L4 7.500 0 10v2z" fill="#1a8fd8" />
      </Svg>
    ),
  },
  {
    icon: (
      <Svg w={30} h={30}>
        <path d="M0 8l4-2 18 18v6L4 21v-1L0 22z" fill="#7a4fb8" />
        <path d="M0 22l4 2L22 8V0L0 20z" fill="#a679dd" />
        <path d="M0 8l4-2v18l-4-2z" fill="#8455c4" />
        <path d="M21 0l9 4v22l-9 4z" fill="#cb97f7" />
      </Svg>
    ),
  },
  {
    icon: (
      <Svg w={29} h={29}>
        <path d="M2 3v14c0 4 16 4 16 0V3z" fill="#f9cf1d" />
        <path d="M2 3v14c0 2 4 3 7 3V3z" fill="#ffe25c" />
        <ellipse cx="10" cy="3" rx="8" ry="3" fill="#e9a55a" />
        <path d="M20 1.500h7.500V9M1.500 20v7H9" stroke="#3fa045" strokeWidth="2.600" />
        <path d="M14 27l12-12M12 14l13 13" stroke="#e0701c" strokeWidth="2.800" />
        <path d="M10 16l6-4 2 2-5 5zM22 15l3-3M25 18h4" stroke="#e0701c" strokeWidth="1.800" />
      </Svg>
    ),
  },
  { icon: <JetIcon label="IJ" /> },
  { icon: <JetIcon label="PS" ps /> },
  {
    icon: (
      <Svg w={24} h={24}>
        <circle cx="12" cy="12" r="12" fill="#f5f5f5" />
        <circle cx="7.500" cy="9" r="1.700" fill="#2b2b2b" />
        <circle cx="16.500" cy="9" r="1.700" fill="#2b2b2b" />
        <path d="M4.500 13.500c2 5.500 13 5.500 15 0" stroke="#2b2b2b" strokeWidth="1.700" />
      </Svg>
    ),
    open: "one",
  },
  { icon: <OfficeIcon letter="X" excel />, open: "one" },
  { icon: <OfficeIcon letter="W" />, open: "one" },
];

function Taskbar() {
  return (
    <div className="flex h-[50px] items-center bg-linear-to-r from-[#252a33] via-[#302b2d] to-[#2c272c] text-[#f4f4f4]">
      <Svg w={20} h={20} className="ml-5">
        <path d="M0 3l8.500-1.200V9.500H0zM9.500 1.600L20 0v9.500H9.500zM0 10.500h8.500v7.800L0 17zM9.500 10.500H20V20L9.500 18.400z" fill="#fff" />
      </Svg>
      <Svg w={20} h={20} className="ml-10">
        <path d="M.7 0v3.500h12V0M.7 6.500h12v8H.7zM.7 20v-3h12v3M18.500 0v4M18.500 10v10" stroke="#fff" strokeWidth="1.300" />
        <path d="M17 6h3v3h-3z" fill="#fff" />
      </Svg>
      <div className="ml-[23px] flex h-full">
        {APPS.map((a, i) => (
          <div key={i} className="flex h-full w-[62px] flex-col items-center">
            <div className="flex h-[47px] items-center pt-[3px]">{a.icon}</div>
            {a.open === "one" && <div className="h-[3px] w-[51px] bg-[#e98bdc]" />}
            {a.open === "many" && (
              <div className="flex h-[3px] w-[51px]"><div className="w-10 bg-[#e98bdc]" /><div className="flex-1 border-l border-[#7d5078] bg-[#b56cab]" /></div>
            )}
          </div>
        ))}
      </div>
      <Svg w={30} h={20} className="ml-[760px]">
        <path d="M3 1h22v17H4c-2 0-3-1-3-3V3c0-1.500.7-2 2-2zM25 5h4v10.500c0 2-1 2.500-3 2.500" stroke="#fff" strokeWidth="2" />
        <path d="M5 5.500h16M15 9.500h6M15 12h6M15 14.500h6M5.500 9.500h6v5h-6z" stroke="#fff" strokeWidth="1.600" />
      </Svg>
      <Svg w={16} h={9} className="ml-8"><path d="M.5 8.500L8 1l7.500 7.500" stroke="#fff" strokeWidth="1.300" /></Svg>
      <Svg w={15} h={18} className="ml-[15px]">
        <rect x="1.500" y="4.500" width="9" height="9" rx="2" stroke="#fff" strokeWidth="1.200" />
        <path d="M10.500 8l3.500-2v6l-3.500-2M2.500 2c2-1.700 6-1.700 8 0M2.500 16c2 1.700 6 1.700 8 0" stroke="#fff" strokeWidth="1.200" />
      </Svg>
      <Svg w={20} h={14} className="ml-3">
        <path d="M5 3.500h13v9H5zM19.300 6v4" stroke="#fff" strokeWidth="1.200" />
        <path d="M6.500 5h6v6h-6z" fill="#fff" />
        <path d="M1 0v2M4 0v2M0 2.500h5v2c0 2-5 2-5 0zM2.500 6v5H5" stroke="#fff" />
      </Svg>
      <Svg w={16} h={16} className="ml-[13px]">
        <circle cx="14" cy="14.500" r="1.500" fill="#fff" />
        <path d="M9.500 15.500c0-3 2-5 5-5M5.500 15.500c0-5 4-9 9-9" stroke="#fff" strokeWidth="1.200" />
        <path d="M1 15.500C1 8 7 2 15 2M3.500 15.500c0-6 5-11 11-11" stroke="#999" />
      </Svg>
      <Svg w={20} h={17} className="ml-[11px]">
        <path d="M.6 6h3l4-4v13l-4-4h-3z" stroke="#fff" strokeWidth="1.200" />
        <path d="M10 6c1.300 1.500 1.300 3.500 0 5" stroke="#fff" />
        <path d="M13 3.500c3 3 3 7 0 10M16 1c4.500 4.500 4.500 10.500 0 15" stroke="#8a8a8a" />
      </Svg>
      <div className="ml-[10px] flex w-[75px] flex-col items-center text-[15px] leading-[23px]">
        <Fit w={52}>4:30 PM</Fit>
        <Fit w={75}>11/15/2024</Fit>
      </div>
      <div className="relative ml-[19px] h-5 w-5">
        <Svg w={20} h={20}>
          <path d="M0 0h20v16h-9l-4 4v-4H0z" fill="#fff" />
          <path d="M4 4.500h12M4 8h12M4 11.500h8" stroke="#333" strokeWidth="1.300" />
        </Svg>
        <div className="absolute left-[9px] top-[9px] flex h-[21px] w-[21px] items-center justify-center rounded-full border border-[#999] bg-[#3a363a] text-[13px] font-semibold leading-none">2</div>
      </div>
      <div className="ml-[25px] h-full w-px bg-[#6a666a]" />
    </div>
  );
}

export default function App() {
  return (
    <div className="h-[1080px] w-[1920px] overflow-hidden bg-[#666666] font-['Open_Sans','Noto_Sans',sans-serif]">
      <div className="relative bg-[#444444]">
        <TitleArt />
        <TitleBar />
        <TabBar />
      </div>
      <Ribbon />
      <Document />
      <StatusBar />
      <Taskbar />
    </div>
  );
}
